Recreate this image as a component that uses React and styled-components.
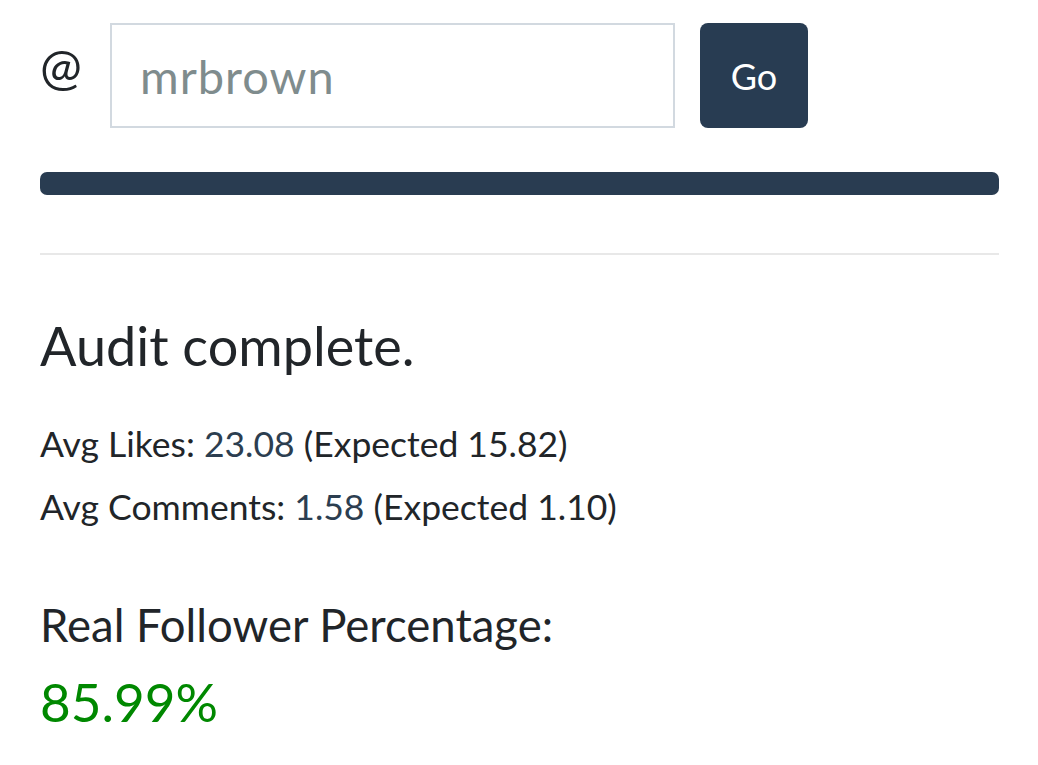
import React from 'react';
import styled, {createGlobalStyle} from 'styled-components';

const GlobalStyle = createGlobalStyle`
body {
margin: 0;
background: #fff;
font-family: Lato, "Noto Sans", sans-serif;
color: #212529;
}
`;

const Page = styled.div`
padding: 23px 39px 40px 40px;
`;

const SearchRow = styled.form`
display: flex;
align-items: flex-start;
`;

const At = styled.span`
font-size: 50px;
line-height: 50px;
margin-top: 18px;
width: 70px;
`;

const Input = styled.input`
box-sizing: border-box;
width: 565px;
height: 105px;
border: 2px solid #d2d9e0;
padding: 0 28px;
font-family: inherit;
font-size: 47px;
letter-spacing: 1px;
color: #7f8c8d;
outline: none;
`;

const GoButton = styled.button`
margin-left: 25px;
width: 108px;
height: 105px;
border: 0;
border-radius: 8px;
background: #283c52;
color: #fff;
font-family: inherit;
font-size: 36px;
`;

const Progress = styled.div`
margin-top: 44px;
height: 23px;
border-radius: 7px;
background: #293c51;
`;

const Divider = styled.hr`
margin: 58px 0 0;
border: 0;
border-top: 2px solid #e8e8e8;
`;

const Title = styled.h2`
margin: 59px 0 0;
font-size: 54px;
font-weight: 400;
line-height: 64px;
`;

const Stat = styled.p`
margin: ${p => p.$first ? '34px' : '0'} 0 0;
font-size: 35.5px;
line-height: 63px;
`;

const Num = styled.span`
color: #2c3e50;
`;

const Label = styled.div`
margin-top: 60px;
font-size: 45.5px;
line-height: 54px;
`;

const Percent = styled.div`
margin-top: 18px;
font-size: 53px;
line-height: 64px;
color: #008800;
`;

export default function App() {
    return (
        <Page>
            <GlobalStyle/>
            <SearchRow onSubmit={e => e.preventDefault()}>
                <At>@</At>
                <Input defaultValue='mrbrown'/>
                <GoButton>Go</GoButton>
            </SearchRow>
            <Progress/>
            <Divider/>
            <Title>Audit complete.</Title>
            <Stat $first>Avg Likes: <Num>23.08</Num> (Expected 15.82)</Stat>
            <Stat>Avg Comments: <Num>1.58</Num> (Expected 1.10)</Stat>
            <Label>Real Follower Percentage:</Label>
            <Percent>85.99%</Percent>
        </Page>
    );
}
